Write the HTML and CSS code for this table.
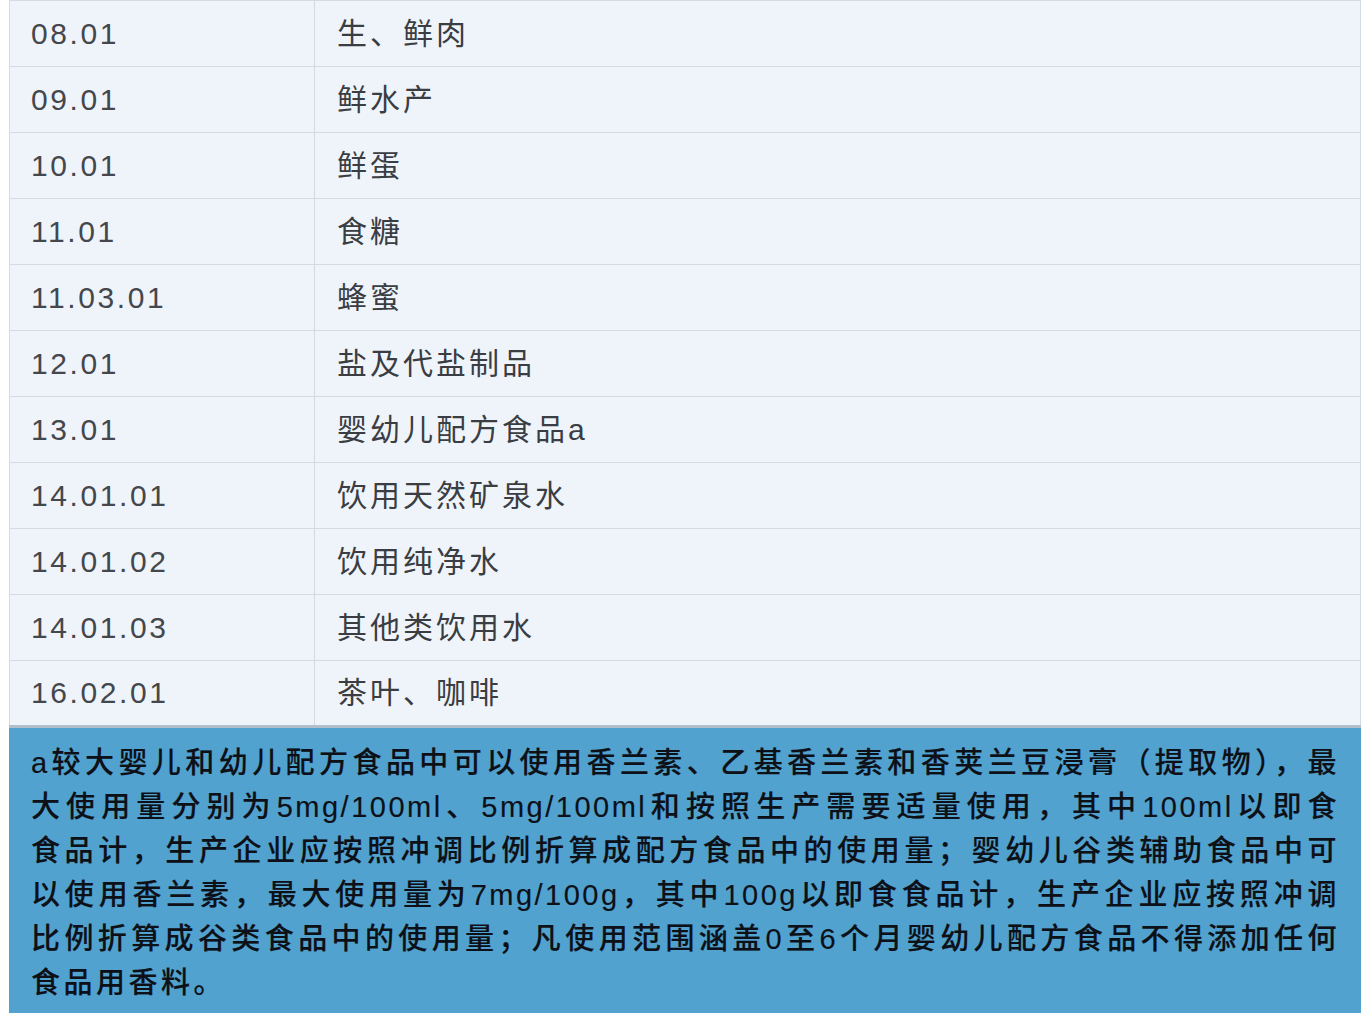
FILE: index.html
```html
<!DOCTYPE html>
<html lang="zh-CN">
<head>
<meta charset="utf-8">
<link rel="stylesheet" href="styles.css">
<title>食品类别</title>
</head>
<body>
<div class="wrap">
  <table class="tbl">
    <tbody>
      <tr><td class="code">08.01</td><td class="name">生、鲜肉</td></tr>
      <tr><td class="code">09.01</td><td class="name">鲜水产</td></tr>
      <tr><td class="code">10.01</td><td class="name">鲜蛋</td></tr>
      <tr><td class="code">11.01</td><td class="name">食糖</td></tr>
      <tr><td class="code">11.03.01</td><td class="name">蜂蜜</td></tr>
      <tr><td class="code">12.01</td><td class="name">盐及代盐制品</td></tr>
      <tr><td class="code">13.01</td><td class="name">婴幼儿配方食品a</td></tr>
      <tr><td class="code">14.01.01</td><td class="name">饮用天然矿泉水</td></tr>
      <tr><td class="code">14.01.02</td><td class="name">饮用纯净水</td></tr>
      <tr><td class="code">14.01.03</td><td class="name">其他类饮用水</td></tr>
      <tr><td class="code">16.02.01</td><td class="name">茶叶、咖啡</td></tr>
    </tbody>
  </table>
  <div class="note">
    <div class="line">a较大婴儿和幼儿配方食品中可以使用香兰素、乙基香兰素和香荚兰豆浸膏（提取物），最</div>
    <div class="line">大使用量分别为5mg/100ml、5mg/100ml和按照生产需要适量使用，其中100ml以即食</div>
    <div class="line">食品计，生产企业应按照冲调比例折算成配方食品中的使用量；婴幼儿谷类辅助食品中可</div>
    <div class="line">以使用香兰素，最大使用量为7mg/100g，其中100g以即食食品计，生产企业应按照冲调</div>
    <div class="line">比例折算成谷类食品中的使用量；凡使用范围涵盖0至6个月婴幼儿配方食品不得添加任何</div>
    <div class="line last">食品用香料。</div>
  </div>
</div>
</body>
</html>
```

FILE: styles.css
```css
html, body {
  margin: 0;
  padding: 0;
  background: #ffffff;
}
body {
  font-family: "Liberation Sans", "Noto Sans CJK SC", sans-serif;
}
.wrap {
  width: 1352px;
  margin-left: 9px;
}
.tbl {
  width: 100%;
  border-collapse: collapse;
  background: #eff4fb;
  border-top: 1px solid #d2dae3;
  border-bottom: 3px solid #b2bfca;
}
.tbl td {
  height: 66px;
  padding: 0 0 0 22px;
  border: 1px solid #d2dae3;
  border-top: none;
  box-sizing: border-box;
  color: #3a3d42;
  font-size: 30px;
  letter-spacing: 3px;
  line-height: 1;
  vertical-align: middle;
}
.tbl tr:last-child td {
  border-bottom: none;
}
.tbl td.code {
  width: 305px;
  padding-left: 21px;
  letter-spacing: 2.6px;
  color: #44474c;
}
.tbl td.name {
  padding-left: 22px;
}
.note {
  background: #52a2d0;
  padding: 13px 22px 8px 22px;
  color: #0d1117;
  font-size: 29px;
  font-weight: 500;
  line-height: 44px;
  letter-spacing: 2.5px;
  -webkit-text-stroke: 0.15px #0d1117;
}
.line {
  text-align: justify;
  text-align-last: justify;
  white-space: nowrap;
}
.line.last {
  text-align: left;
  text-align-last: left;
  letter-spacing: 3.5px;
}
```
